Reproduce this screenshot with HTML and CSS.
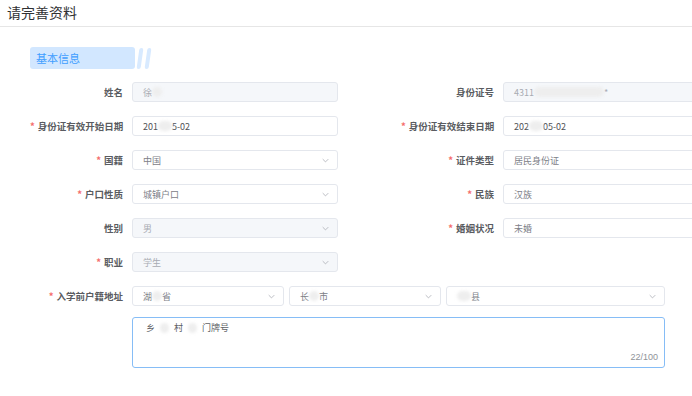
FILE: index.html
```html
<!DOCTYPE html>
<html lang="zh">
<head>
<meta charset="utf-8">
<link rel="stylesheet" href="styles.css">
</head>
<body>
<div class="page">
  <header class="topbar"><h1 class="title">请完善资料</h1></header>
  <div class="section-head">
    <div class="section-box">基本信息</div>
    <span class="stripe"></span><span class="stripe"></span>
  </div>
  <div class="form">
    <div class="item"><label class="label">姓名</label><div class="input disabled">徐<span class="mask m1"></span></div></div>
    <div class="item"><label class="label">身份证号</label><div class="input disabled wide">4311<span class="mask m4"></span>*</div></div>

    <div class="item"><label class="label req">身份证有效开始日期</label><div class="input dark">201<span class="mask m2"></span>5-02</div></div>
    <div class="item"><label class="label req">身份证有效结束日期</label><div class="input dark wide">202<span class="mask m2"></span>05-02</div></div>

    <div class="item"><label class="label req">国籍</label><div class="input select">中国<svg class="arrow" viewBox="0 0 10 6"><path d="M1 1l4 4 4-4"/></svg></div></div>
    <div class="item"><label class="label req">证件类型</label><div class="input wide">居民身份证</div></div>

    <div class="item"><label class="label req">户口性质</label><div class="input select">城镇户口<svg class="arrow" viewBox="0 0 10 6"><path d="M1 1l4 4 4-4"/></svg></div></div>
    <div class="item"><label class="label req">民族</label><div class="input wide">汉族</div></div>

    <div class="item"><label class="label">性别</label><div class="input select disabled">男<svg class="arrow" viewBox="0 0 10 6"><path d="M1 1l4 4 4-4"/></svg></div></div>
    <div class="item"><label class="label req">婚姻状况</label><div class="input wide">未婚</div></div>

    <div class="item"><label class="label req">职业</label><div class="input select disabled">学生<svg class="arrow" viewBox="0 0 10 6"><path d="M1 1l4 4 4-4"/></svg></div></div>
    <div class="item"></div>

    <div class="item full">
      <label class="label req">入学前户籍地址</label>
      <div class="addr">
        <div class="selects">
          <div class="input select s1">湖<span class="mask m1"></span>省<svg class="arrow" viewBox="0 0 10 6"><path d="M1 1l4 4 4-4"/></svg></div>
          <div class="input select s1">长<span class="mask m1"></span>市<svg class="arrow" viewBox="0 0 10 6"><path d="M1 1l4 4 4-4"/></svg></div>
          <div class="input select s2"><span class="mask m2"></span>县<svg class="arrow" viewBox="0 0 10 6"><path d="M1 1l4 4 4-4"/></svg></div>
        </div>
        <div class="textarea">
          <div class="ta-text">乡<span class="mask m1"></span>村<span class="mask m1"></span>门牌号</div>
          <span class="count">22/100</span>
        </div>
      </div>
    </div>
  </div>
</div>
</body>
</html>
```
FILE: styles.css
```css
html, body {
  margin: 0;
  padding: 0;
  background: #fff;
  overflow: hidden;
}
body {
  font-family: "Noto Sans CJK SC", "Noto Sans", sans-serif;
  width: 692px;
  height: 396px;
}
.page {
  width: 692px;
}
.topbar {
  height: 27px;
  border-bottom: 1px solid #e6e6e6;
  box-sizing: border-box;
  padding-left: 7px;
  display: flex;
  align-items: center;
}
.title {
  margin: 0;
  font-size: 14px;
  font-weight: normal;
  color: #303133;
  line-height: 1;
  margin-top: -2px;
}
.section-head {
  margin: 20px 0 0 30px;
  display: flex;
  align-items: center;
  height: 22px;
}
.section-box {
  width: 105px;
  height: 22px;
  box-sizing: border-box;
  padding-left: 6px;
  background: #d2e7ff;
  border-radius: 3px;
  color: #409eff;
  font-size: 11px;
  line-height: 22px;
}
.stripe {
  width: 4px;
  height: 21px;
  background: #d8eaff;
  border-radius: 2px;
  transform: skewX(-8deg);
  margin-left: 3px;
}
.stripe + .stripe {
  margin-left: 4px;
}
.form {
  margin: 13px 0 0 30px;
  display: grid;
  grid-template-columns: 308px 308px;
  column-gap: 63px;
  row-gap: 14px;
}
.item {
  display: flex;
  align-items: center;
  gap: 9px;
  min-height: 20px;
}
.item.full {
  grid-column: 1 / span 2;
  align-items: flex-start;
}
.label {
  width: 93px;
  flex: none;
  text-align: right;
  font-size: 9.5px;
  font-weight: bold;
  color: #5a5c61;
  line-height: 20px;
  white-space: nowrap;
}
.label.req::before {
  content: "*";
  color: #f56c6c;
  margin-right: 3px;
  font-weight: bold;
}
.input {
  width: 206px;
  height: 20px;
  box-sizing: border-box;
  border: 1px solid #e4e7ed;
  border-radius: 3px;
  background: #fff;
  padding-left: 10px;
  font-size: 9px;
  color: #7d8087;
  display: flex;
  align-items: center;
  position: relative;
  flex: none;
  white-space: nowrap;
}
.input.dark {
  color: #505256;
}
.input.wide {
  width: 210px;
}
.input.disabled {
  background: #f5f7fa;
  color: #a8abb2;
}
.input.select .arrow {
  position: absolute;
  right: 8px;
  top: 7px;
  width: 7px;
  height: 5px;
  fill: none;
  stroke: #a8abb2;
  stroke-width: 1.1;
}
.mask {
  display: inline-block;
  height: 10px;
  background: #eeeeee;
  border-radius: 5px;
  filter: blur(1.5px);
}
.m1 { width: 10px; }
.m2 { width: 14px; }
.m3 { width: 18px; }
.m4 { width: 70px; }
.addr {
  display: flex;
  flex-direction: column;
  gap: 11px;
}
.selects {
  display: flex;
  gap: 5px;
}
.input.s1 { width: 152px; }
.input.s2 { width: 219px; }
.textarea {
  width: 533px;
  height: 51px;
  box-sizing: border-box;
  border: 1px solid #86bdf6;
  border-radius: 3px;
  position: relative;
  padding: 3px 0 0 13px;
}
.ta-text {
  font-size: 9px;
  color: #606266;
  display: flex;
  align-items: center;
  gap: 5px;
  line-height: 14px;
}
.ta-text .mask {
  width: 9px;
}
.count {
  position: absolute;
  right: 6px;
  bottom: 5px;
  font-size: 9px;
  color: #909399;
  font-family: "Liberation Sans", sans-serif;
}
```
